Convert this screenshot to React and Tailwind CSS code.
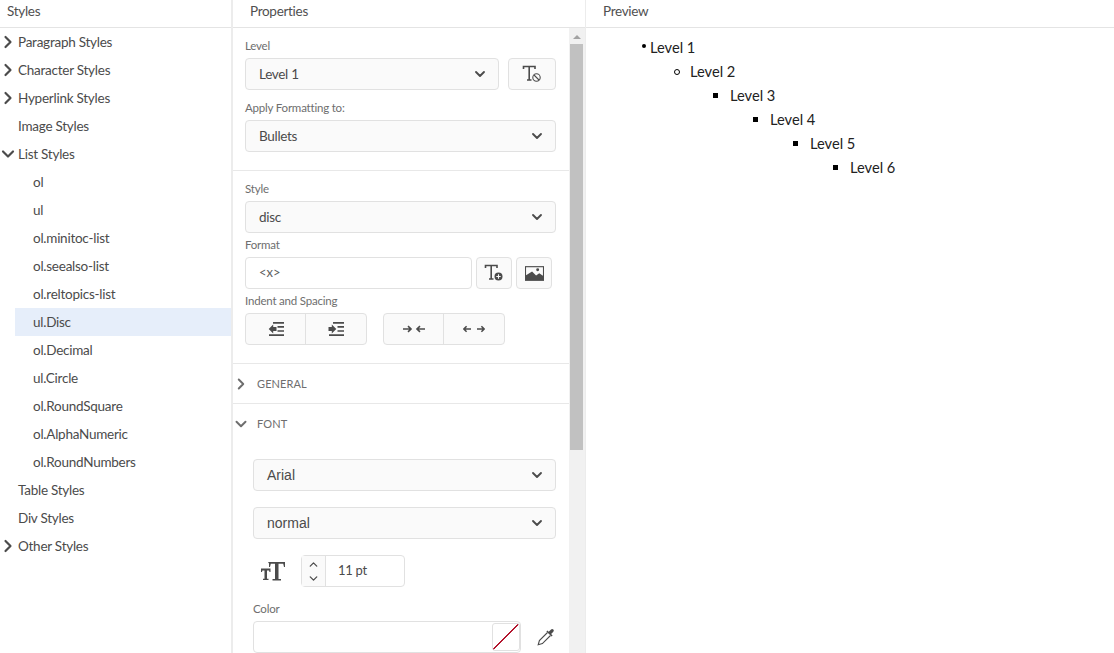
import { ChevronDown, ChevronRight, ChevronUp } from 'lucide-react';

const treeRows = [
  { label: 'Paragraph Styles', arrow: 'right' },
  { label: 'Character Styles', arrow: 'right' },
  { label: 'Hyperlink Styles', arrow: 'right' },
  { label: 'Image Styles' },
  { label: 'List Styles', arrow: 'down' },
  { label: 'ol', child: true },
  { label: 'ul', child: true },
  { label: 'ol.minitoc-list', child: true },
  { label: 'ol.seealso-list', child: true },
  { label: 'ol.reltopics-list', child: true },
  { label: 'ul.Disc', child: true, selected: true },
  { label: 'ol.Decimal', child: true },
  { label: 'ul.Circle', child: true },
  { label: 'ol.RoundSquare', child: true },
  { label: 'ol.AlphaNumeric', child: true },
  { label: 'ol.RoundNumbers', child: true },
  { label: 'Table Styles' },
  { label: 'Div Styles' },
  { label: 'Other Styles', arrow: 'right' },
];

const previewRows = [
  { label: 'Level 1', bullet: 'w-[4px] h-[4px] rounded-full bg-black -left-[8px] top-[8px]' },
  { label: 'Level 2', bullet: 'w-[6px] h-[6px] rounded-full border border-black -left-[16px] top-[9px]' },
  { label: 'Level 3', bullet: 'w-[5px] h-[5px] bg-black -left-[17px] top-[9px]' },
  { label: 'Level 4', bullet: 'w-[5px] h-[5px] bg-black -left-[17px] top-[9px]' },
  { label: 'Level 5', bullet: 'w-[5px] h-[5px] bg-black -left-[17px] top-[9px]' },
  { label: 'Level 6', bullet: 'w-[5px] h-[5px] bg-black -left-[17px] top-[9px]' },
];

const PaneTitle = ({ children, className = '' }) => (
  <div className={`h-[28px] shrink-0 border-b border-[#e4e4e4] text-[13.5px] tracking-[-0.3px] leading-[22px] text-[#505050] ${className}`}>
    {children}
  </div>
);

const Label = ({ children }) => (
  <div className="h-4 mb-1 text-[11.5px] tracking-[-0.2px] leading-4 text-[#6e6e6e]">{children}</div>
);

const Select = ({ value, className = '', font = 'font-["Lato"] text-[13.5px] tracking-[-0.3px]' }) => (
  <div className={`h-8 flex items-center justify-between pl-[13px] pr-[10px] bg-[#fafafa] border border-[#e1e1e1] rounded-[4px] text-[#4b4b4b] ${font} ${className}`}>
    <span>{value}</span>
    <ChevronDown size={16} strokeWidth={2.8} className="text-[#4b4b4b]" />
  </div>
);

const IconButton = ({ children, className = '' }) => (
  <div className={`h-8 flex items-center justify-center bg-[#fafafa] border border-[#e1e1e1] rounded-[4px] ${className}`}>
    {children}
  </div>
);

const TextNoneIcon = () => (
  <svg width="20" height="18" viewBox="0 0 20 18" fill="none" stroke="#4b4b4b">
    <path d="M1.500 4V1.500H13V4M7.200 1.500V15M5 15H9.500" strokeWidth="1.600" />
    <circle cx="14.500" cy="12.500" r="3.700" fill="#fafafa" strokeWidth="1.100" />
    <path d="M12 10l5 5" strokeWidth="1.100" />
  </svg>
);

const TextAddIcon = () => (
  <svg width="20" height="18" viewBox="0 0 20 18" fill="none" stroke="#4b4b4b">
    <path d="M1.500 4V1.500H13V4M7.200 1.500V15M5 15H9.500" strokeWidth="1.600" />
    <circle cx="14.500" cy="12.500" r="4" fill="#4b4b4b" stroke="none" />
    <path d="M12.300 12.500h4.400M14.500 10.300v4.400" stroke="#fafafa" strokeWidth="1.100" />
  </svg>
);

const ImageIcon = () => (
  <svg width="19" height="15" viewBox="0 0 18 14">
    <path d="M0 0h18v14H0z" fill="#4b4b4b" />
    <path d="M1 1h16v8.200l-3.500-2.400-3 2-3.800-3.600L1 8.600z" fill="#fafafa" />
    <circle cx="12" cy="3.500" r="1.400" fill="#4b4b4b" />
  </svg>
);

const OutdentIcon = ({ flip }) => (
  <svg width="16" height="14" viewBox="0 0 16 14" fill="none" stroke="#4b4b4b" strokeWidth="1.700">
    <path d="M5 0.900h11M9.500 4.900H16M9.500 9H16M1 13.100h15" />
    <path d={flip ? 'M0.500 5h3.300V2.600L8.300 7 3.800 11.400V9H0.500z' : 'M8.500 5H5.200V2.600L0.700 7l4.500 4.400V9h3.300z'} fill="#4b4b4b" stroke="none" />
  </svg>
);

const ArrowPair = ({ inward }) => (
  <svg width="22" height="10" viewBox="0 0 22 10" fill="none" stroke="#4b4b4b" strokeWidth="1.600">
    {inward ? (
      <>
        <path d="M0 5h7.500M5 2.200 8 5 5 7.800" />
        <path d="M22 5h-7.500M17 2.200 14 5l3 2.800" />
      </>
    ) : (
      <>
        <path d="M8 5H.8M3.600 2.200.8 5l2.800 2.800" />
        <path d="M14 5h7.200M18.400 2.200 21.200 5l-2.800 2.800" />
      </>
    )}
  </svg>
);

const Segmented = ({ left, right }) => (
  <div className="h-8 w-[122px] flex bg-[#fafafa] border border-[#e1e1e1] rounded-[4px]">
    <div className="w-[60px] flex items-center justify-center border-r border-[#e1e1e1]">{left}</div>
    <div className="flex-1 flex items-center justify-center">{right}</div>
  </div>
);

const FontSizeIcon = () => (
  <svg width="24" height="19" viewBox="0 0 24 19" fill="#4b4b4b">
    <path d="M0 6.500h9.500V10h-1l-.4-1.600H6v8.400h1.500V18H2v-1.200h1.500V8.400H1.400L1 10H0z" />
    <path d="M7 0h17v5h-1l-.8-3.300h-4.700V17H20v1.500h-8.500V17H14V1.700H9.800L9 5H8V1.500z" />
  </svg>
);

const EyedropperIcon = () => (
  <svg width="18" height="18" viewBox="0 0 18 18" fill="none" stroke="#4b4b4b">
    <path d="M10.500 4.500 2.400 12.600 1.200 16.800l4.200-1.200 8.100-8.100" strokeWidth="1.100" fill="#fff" />
    <path d="M9.400 3.400l5.200 5.200 1-1-1.500-1.500 2-2.100c.9-.9.9-1.800.2-2.500s-1.600-.7-2.500.2l-2.100 2-1.300-1.300z" fill="#4b4b4b" stroke="none" />
  </svg>
);

const TreeRow = ({ row }) => (
  <div className={`h-7 flex items-center text-[13.5px] tracking-[-0.25px] text-[#4b4b4b] ${row.selected ? 'ml-[15px] pl-[18px] bg-[#e6eefa]' : row.child ? 'pl-[33px]' : 'pl-[18px]'} relative`}>
    {row.arrow === 'right' && (
      <ChevronRight size={20} strokeWidth={2.6} className="absolute -left-[2px] top-[4px] text-[#4b4b4b]" />
    )}
    {row.arrow === 'down' && (
      <ChevronDown size={20} strokeWidth={2.6} className="absolute -left-[2px] top-[4px] text-[#4b4b4b]" />
    )}
    {row.label}
  </div>
);

const SectionHead = ({ title, open, className = 'h-10' }) => (
  <div className={`flex items-center text-[11px] tracking-[0.1px] text-[#6e6e6e] ${className}`}>
    {open
      ? <ChevronDown size={18} strokeWidth={2.6} className="-ml-px text-[#6e6e6e]" />
      : <ChevronRight size={18} strokeWidth={2.6} className="-ml-px text-[#6e6e6e]" />}
    <span className="ml-[7px]">{title}</span>
  </div>
);

const Scrollbar = () => (
  <div className="w-4 shrink-0 pl-px bg-[#f1f1f1] flex flex-col">
    <div className="h-4 w-[13px] flex items-center justify-center">
      <div className="w-0 h-0 mt-[2px] border-x-[4px] border-x-transparent border-b-[4px] border-b-[#a3a3a3]" />
    </div>
    <div className="w-[13px] h-[406px] bg-[#c1c1c1]" />
  </div>
);

export default function App() {
  return (
    <div className='h-[653px] w-[1114px] overflow-hidden flex bg-white font-["Lato",sans-serif]'>
      {/* Styles tree */}
      <div className="w-[233px] shrink-0 flex flex-col border-r-2 border-[#ececec]">
        <PaneTitle className="pl-[7px]">Styles</PaneTitle>
        <div>
          {treeRows.map((row) => (
            <TreeRow key={row.label} row={row} />
          ))}
        </div>
      </div>

      {/* Properties */}
      <div className="w-[353px] shrink-0 flex flex-col border-r border-[#ececec]">
        <PaneTitle className="pl-[17px]">Properties</PaneTitle>
        <div className="flex-1 flex min-h-0">
          <div className="w-[336px] shrink-0 overflow-hidden">
            <div className="pt-[10px] pl-3 pr-[13px] pb-[18px] border-b border-[#e8e8e8]">
              <Label>Level</Label>
              <div className="flex gap-[9px] mb-[10px]">
                <Select value="Level 1" className="w-[254px]" />
                <IconButton className="w-[48px]"><TextNoneIcon /></IconButton>
              </div>
              <Label>Apply Formatting to:</Label>
              <Select value="Bullets" />
            </div>

            <div className="pt-[10px] pl-3 pr-[13px] pb-[18px] border-b border-[#e8e8e8]">
              <Label>Style</Label>
              <Select value="disc" className="mb-1" />
              <Label>Format</Label>
              <div className="flex gap-1 mb-1">
                <div className="w-[227px] h-8 flex items-center pl-[13px] border border-[#e1e1e1] rounded-[4px] text-[13px] text-[#5f5f5f]">
                  {'<x>'}
                </div>
                <IconButton className="w-9"><TextAddIcon /></IconButton>
                <IconButton className="w-9"><ImageIcon /></IconButton>
              </div>
              <Label>Indent and Spacing</Label>
              <div className="flex gap-4">
                <Segmented left={<OutdentIcon />} right={<OutdentIcon flip />} />
                <Segmented left={<ArrowPair inward />} right={<ArrowPair />} />
              </div>
            </div>

            <div className="border-b border-[#e8e8e8]">
              <SectionHead title="GENERAL" className="h-[39px] pt-px" />
            </div>
            <SectionHead title="FONT" open />

            <div className="pt-[15px] pl-5 pr-[13px]">
              <Select value="Arial" font='font-["Liberation_Sans"] text-[14px]' className="mb-4" />
              <Select value="normal" font='font-["Liberation_Sans"] text-[14px]' className="mb-4" />
              <div className="flex items-center mb-[14px]">
                <div className="w-[48px] pl-2"><FontSizeIcon /></div>
                <div className="w-[104px] h-8 flex border border-[#e1e1e1] rounded-[4px] text-[13px] tracking-[-0.3px] text-[#4b4b4b]">
                  <div className="w-6 flex flex-col items-center justify-center border-r border-[#e1e1e1] bg-[#fafafa]">
                    <ChevronUp size={13} strokeWidth={2.4} />
                    <ChevronDown size={13} strokeWidth={2.4} className="mt-px" />
                  </div>
                  <div className="flex-1 flex items-center pl-3">11 pt</div>
                </div>
              </div>
              <Label>Color</Label>
              <div className="flex items-center">
                <div className="w-[268px] h-8 shrink-0 flex justify-end items-center border border-[#e1e1e1] rounded-[4px]">
                  <div className="w-7 h-7 border border-[#e1e1e1] rounded-[3px] bg-[linear-gradient(to_bottom_right,transparent_48%,#b3142d_48%,#b3142d_51%,transparent_51%)]" />
                </div>
                <div className="ml-[16px]"><EyedropperIcon /></div>
              </div>
            </div>
          </div>
          <Scrollbar />
        </div>
      </div>

      {/* Preview */}
      <div className="flex-1 flex flex-col">
        <PaneTitle className="pl-[17px]">Preview</PaneTitle>
        <div className="pt-2 pl-[64px] text-[14.67px] leading-6 text-[#222222]">
          {previewRows.map((row, i) => (
            <div key={row.label} className="relative w-max" style={{ marginLeft: i * 40 }}>
              <span className={`absolute ${row.bullet}`} />
              {row.label}
            </div>
          ))}
        </div>
      </div>
    </div>
  );
}
